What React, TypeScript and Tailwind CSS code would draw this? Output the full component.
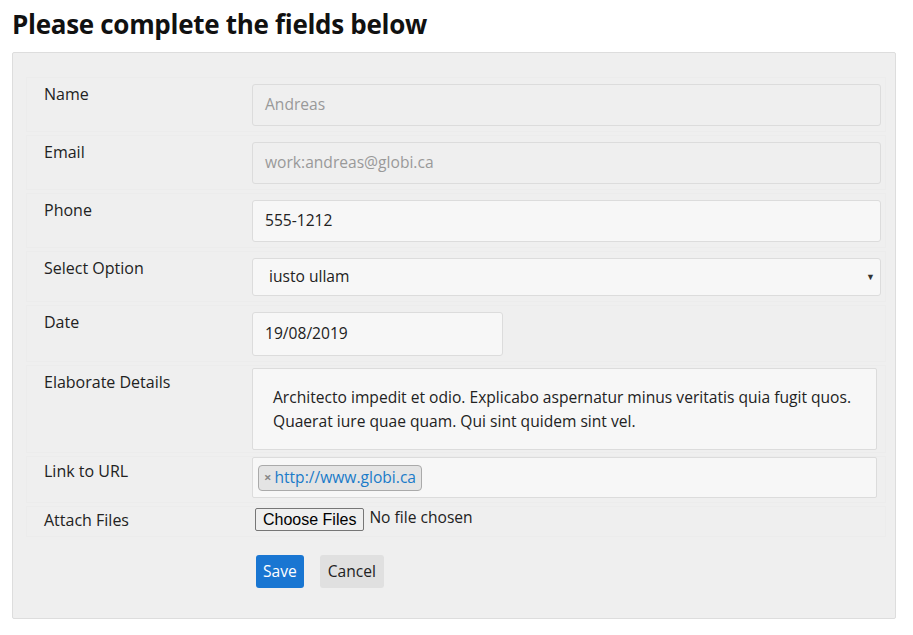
import React from 'react';

const font = { fontFamily: '"Open Sans", "Noto Sans", sans-serif' };

function Row({
  label,
  children,
  className = '',
  labelClass = '',
}: {
  label: string;
  children: React.ReactNode;
  className?: string;
  labelClass?: string;
}) {
  return (
    <div className={`flex border border-[#ececec] mb-[3px] pl-[17px] pr-[4px] ${className}`}>
      <div className={`w-[208px] shrink-0 text-[16px] text-[#222] leading-[20px] ${labelClass}`}>{label}</div>
      <div className="flex-1 min-w-0">{children}</div>
    </div>
  );
}

export default function App() {
  return (
    <div className="bg-white w-[913px] h-[635px] px-[12px] pt-[4px] text-[15.6px]" style={font}>
      <h2 className="text-[26px] font-bold text-[#111] leading-[40px] mb-[8px] tracking-[-0.3px]">
        Please complete the fields below
      </h2>

      <div className="w-[884px] bg-[#efefef] border border-[#dddddd] rounded-[2px] pl-[13px] pr-[9px] pt-[24px] pb-[30px]">
        <Row label="Name" className="pt-[6px] pb-[5px]">
          <div className="h-[42px] border border-[#dcdcdc] rounded-[3px] bg-[#efefef] flex items-center px-[12px] text-[#999]">
            Andreas
          </div>
        </Row>
        <Row label="Email" className="pt-[6px] pb-[5px]">
          <div className="h-[42px] border border-[#dcdcdc] rounded-[3px] bg-[#efefef] flex items-center px-[12px] text-[#999]">
            work:andreas@globi.ca
          </div>
        </Row>
        <Row label="Phone" className="pt-[6px] pb-[5px]">
          <div className="h-[42px] border border-[#dcdcdc] rounded-[3px] bg-[#f7f7f7] flex items-center px-[12px] text-[#222]">
            555-1212
          </div>
        </Row>
        <Row label="Select Option" className="pt-[6px] pb-[5px]">
          <div className="h-[38px] border border-[#dcdcdc] rounded-[3px] bg-[#f7f7f7] flex items-center pl-[16px] pr-[5px] text-[#222]">
            <span className="flex-1">iusto ullam</span>
            <span className="text-[9px] text-[#333]">▼</span>
          </div>
        </Row>
        <Row label="Date" className="pt-[6px] pb-[5px]">
          <div className="w-[251px] h-[44px] border border-[#dcdcdc] rounded-[3px] bg-[#f7f7f7] flex items-center px-[12px] text-[#222]">
            19/08/2019
          </div>
        </Row>
        <Row label="Elaborate Details" className="pt-[2px] pb-[2px]" labelClass="pt-[4px]">
          <div className="mr-[4px] h-[82px] border border-[#dcdcdc] rounded-[2px] bg-[#f7f7f7] px-[20px] pt-[16px] leading-[24px] text-[#222]">
            Architecto impedit et odio. Explicabo aspernatur minus veritatis quia fugit quos. Quaerat iure quae quam. Qui sint quidem sint vel.
          </div>
        </Row>
        <Row label="Link to URL" className="pt-0 pb-[4px]" labelClass="pt-[4px]">
          <div className="mr-[4px] h-[41px] border border-[#dcdcdc] rounded-[2px] bg-[#f7f7f7] flex items-center px-[5px]">
            <span className="flex items-center h-[26px] border border-[#aaaaaa] rounded-[4px] bg-[#e4e4e4] pl-[5px] pr-[5px]">
              <span className="text-[#888] text-[13px] font-bold mr-[3px]">×</span>
              <span className="text-[#1a7bc9]">http://www.globi.ca</span>
            </span>
          </div>
        </Row>
        <Row label="Attach Files" className="pt-[1px] pb-[5px]" labelClass="pt-[2px]">
          <div className="flex items-center h-[23px] pl-[3px]">
            <span
              className="h-[23px] border border-[#767676] rounded-[2px] bg-[#efefef] px-[7px] flex items-center text-[16px] text-black"
              style={{ fontFamily: '"Liberation Sans", Arial, sans-serif' }}
            >
              Choose Files
            </span>
            <span className="ml-[5px] text-[#222] -mt-[4px]">No file chosen</span>
          </div>
        </Row>
        <div className="flex gap-[16px] pl-[230px] pt-[15px]">
          <button className="h-[33px] px-[7px] rounded-[3px] bg-[#1976d2] text-white">Save</button>
          <button className="h-[33px] px-[8px] rounded-[3px] bg-[#e0e0e0] text-[#222]">Cancel</button>
        </div>
      </div>
    </div>
  );
}
